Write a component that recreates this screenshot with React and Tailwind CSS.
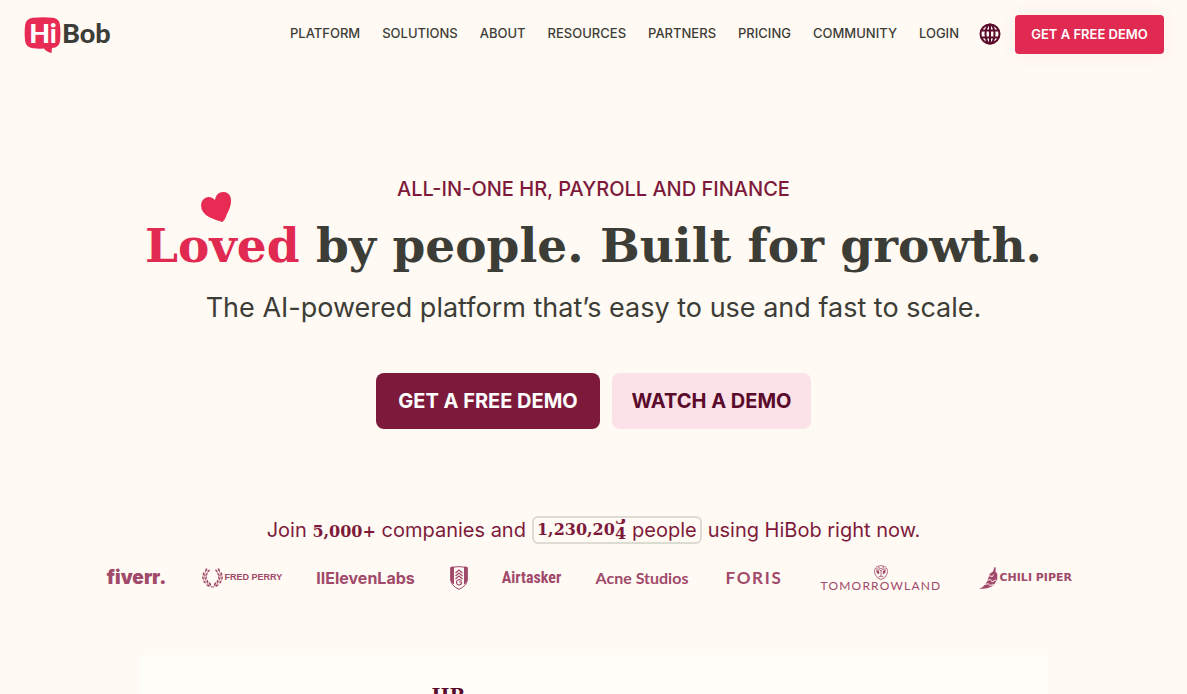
import React from "react";

const navItems = ["PLATFORM", "SOLUTIONS", "ABOUT", "RESOURCES", "PARTNERS", "PRICING", "COMMUNITY", "LOGIN"];

function BobLogo() {
    return (
        <a href="#" aria-label="HiBob" className="flex items-center font-['Lato'] text-[27px] font-black leading-8">
            <span className="relative flex h-9 w-[38px] justify-center">
                <svg className="absolute inset-0" width="38" height="36" viewBox="0 0 38 36" fill="#e72b54" aria-hidden="true">
                    <path d="M9 .8Q19-.4 29 .8Q35.300 1.500 36 8Q36.800 16 36 24Q35.300 30.500 28 31L27.500 36Q22 34.500 20 31.500Q14 31.900 9 31.200Q2 30.500 1.100 24Q.2 16 1.100 8Q2 1.500 9 .8Z" />
                </svg>
                <span className="relative text-white">Hi</span>
            </span>
            <span className="pb-1 text-[#3d3d38]">Bob</span>
        </a>
    );
}

function Globe() {
    return (
        <svg width="22" height="22" viewBox="0 0 22 22" fill="none" stroke="#5a0a2a" strokeWidth="2" aria-hidden="true">
            <circle cx="11" cy="11" r="9.500" />
            <ellipse cx="11" cy="11" rx="4.500" ry="9.500" />
            <path d="M2.500 7.500h17M2.500 14.500h17M11 1.500v19" />
        </svg>
    );
}

function Laurel() {
    const leaves = [
        [5, 3, 20], [2.500, 7, 5], [2, 11, -15], [3.500, 15, -35], [7, 18.500, -60],
        [7.500, 4, 40], [5.500, 7.500, 35], [5, 11, 15], [6.500, 14.500, -5], [9, 17, -30],
    ];
    return (
        <svg className="shrink-0" width="23" height="22" viewBox="0 0 23 22" fill="currentColor" aria-hidden="true">
            {[0, 1].map((side) => (
                <g key={side} transform={side ? "translate(23 0) scale(-1 1)" : undefined}>
                    {leaves.map(([x, y, r], index) => (
                        <ellipse key={index} cx={x} cy={y} rx=".8" ry="1.800" transform={`rotate(${r} ${x} ${y})`} />
                    ))}
                    <path d="M6.500 2Q2 7 4 12Q6 18 13 20.500" fill="none" stroke="currentColor" strokeWidth=".6" />
                </g>
            ))}
        </svg>
    );
}

function Shield() {
    return (
        <svg width="18" height="24" viewBox="0 0 18 24" fill="none" stroke="currentColor" aria-label="Fulham FC" role="img">
            <path d="M.7 1.500Q9-.3 17.300 1.500V14Q16.500 20 9 23.300Q1.500 20 .7 14Z" />
            <path d="M1 1.500l2.500-.5v17Q1.200 16 1 14ZM17 1.500l-2.500-.5v17Q16.800 16 17 14Z" fill="currentColor" />
            <path d="M5.500 7L9 4l3.500 3M5.500 10L9 7l3.500 3M5.500 13L9 10l3.500 3" strokeWidth="1.300" />
            <path d="M11.500 14.500Q8 12.500 6.500 15.500Q6.500 19 9 19Q12 18.500 11.500 16H9" strokeWidth="1.200" />
        </svg>
    );
}

function Emblem() {
    return (
        <svg width="14" height="15" viewBox="0 0 14 15" fill="none" stroke="currentColor" strokeWidth=".8" aria-hidden="true">
            <path d="M3 1.500Q7-.3 11 1.500Q14.500 4 13 9Q11 14 7 14.500Q3 14 1 9Q-.5 4 3 1.500Z" />
            <path d="M2 4Q5 3 7 6Q9 3 12 4M7 6v6M4.500 12Q7 10 9.500 12M4 2L7 4l3-2" />
            <path d="M2.500 5l2.500 1v3L3 8ZM11.500 5L9 6v3l2-1Z" fill="currentColor" strokeWidth=".4" />
        </svg>
    );
}

function Chili() {
    return (
        <svg className="shrink-0" width="20" height="22" viewBox="0 0 20 22" fill="currentColor" aria-hidden="true">
            <path d="M15.500 0l1.200.5-.2 4 1.800 2.500v5l-2.300 4.200-3.500 3.300Q7.500 22.500 0 21.500Q2.500 21 4.500 19.200L7.500 15.500l2.200-5.500.8-3 3.500-2.500Z" />
            <path d="M9 8.500l4.500 1 1-2M8 13.500l3.500-1 1.500 2.300 4-2M5.500 17.500l4-.8 1.500 2 3-1.500" fill="none" stroke="#fffaf3" strokeWidth=".9" />
        </svg>
    );
}

function Customers() {
    return (
        <div className="mt-5 flex h-7 items-center justify-center gap-9 whitespace-nowrap text-[#a1496a]">
            <span className="flex w-14 justify-center text-[19px] font-black">fiverr.</span>
            <span className="flex w-[81px] items-center gap-px font-['Liberation_Sans'] text-[9px] font-bold">
                <Laurel /> FRED PERRY
            </span>
            <span className="flex w-24 justify-center text-[16px] font-bold">IIElevenLabs</span>
            <Shield />
            <span className="flex w-14 justify-center font-['Liberation_Sans_Narrow','Roboto_Condensed','Liberation_Sans'] text-[16px] font-bold">Airtasker</span>
            <span className="flex w-[93px] justify-center font-['Lato'] text-[16px] font-bold">Acne Studios</span>
            <span className="flex w-[59px] justify-center font-['Lato'] text-[17px] font-bold tracking-widest">FORIS</span>
            <span className="flex w-[123px] flex-col items-center font-['Lato'] text-[12px] leading-3 tracking-widest">
                <Emblem />
                TOMORROWLAND
            </span>
            <span className="flex w-[100px] items-center gap-px font-['DejaVu_Sans'] text-[11px] font-bold">
                <Chili /> CHILI PIPER
            </span>
        </div>
    );
}

function Counter() {
    return (
        <span className="mx-[6px] flex h-7 items-center rounded-md border-2 border-[#dcdcd2] px-[3px]">
            <span className="font-['DejaVu_Serif'] text-[16px] font-bold">1,230,20</span>
            <span className="flex h-[22px] flex-col justify-end overflow-hidden font-['DejaVu_Serif'] text-[16px] font-bold leading-[15px]">
                <span>3</span>
                <span>4</span>
            </span>
            <span className="ml-[6px]">people</span>
        </span>
    );
}

export default function App() {
    return (
        <div className="min-h-screen bg-[#fffaf3] font-['Inter',sans-serif] text-[#3d3d38]">
            <header className="flex items-center justify-between pt-[15px] pr-[23px] pl-6">
                <BobLogo />
                <div className="flex items-center">
                    <nav className="flex gap-[22px] pb-px text-[13px] font-medium">
                        {navItems.map((item) => (
                            <a key={item} href="#">{item}</a>
                        ))}
                    </nav>
                    <button type="button" aria-label="Language" className="ml-5 pb-px">
                        <Globe />
                    </button>
                    <a href="#" className="ml-[14px] flex h-[39px] w-[149px] items-center justify-center rounded bg-[#e12a52] text-[13px] font-semibold text-white shadow-[0_0_20px_#e12a520f]">
                        GET A FREE DEMO
                    </a>
                </div>
            </header>

            <main>
                <section className="flex flex-col items-center pt-[122px] text-center">
                    <p className="text-[20px] font-medium leading-[26px] text-[#7d1a3c]">ALL-IN-ONE HR, PAYROLL AND FINANCE</p>
                    <h1 className="mt-[14px] whitespace-nowrap font-['DejaVu_Serif'] text-[47px] font-bold leading-[60px]">
                        <span className="relative text-[#e12a52]">
                            Loved
                            <svg className="absolute -top-[26px] left-14" width="31" height="30" viewBox="0 0 31 30" fill="#e72b54" aria-hidden="true">
                                <path d="M21.500 30Q15 28.500 8 25Q0 20.500 0 13Q.5 6.500 7 5Q11 4.500 14 8Q15 1.500 20 .3Q27-1 29.500 5Q31.500 12 26 22Q24.500 27 21.500 30Z" />
                            </svg>
                        </span>{" "}
                        by people. Built for growth.
                    </h1>
                    <p className="mt-[14px] text-[27px] leading-9">The AI-powered platform that’s easy to use and fast to scale.</p>
                    <div className="mt-[47px] flex gap-3 text-[20px] font-bold">
                        <a href="#" className="flex h-14 w-56 items-center justify-center rounded-lg bg-[#7d1a3c] text-white">GET A FREE DEMO</a>
                        <a href="#" className="flex h-14 w-[199px] items-center justify-center rounded-lg bg-[#fbe1e8] text-[#5a0a2a]">WATCH A DEMO</a>
                    </div>
                </section>

                <section className="pt-[87px]">
                    <div className="flex h-7 items-center justify-center whitespace-nowrap text-[20px] leading-7 text-[#7d1a3c]">
                        <p>
                            Join <strong className="font-['DejaVu_Serif'] text-[16px] leading-none">5,000+</strong> companies and
                        </p>
                        <Counter />
                        <p>using HiBob right now.</p>
                    </div>
                    <Customers />
                </section>

                <section className="mx-auto mt-[63px] w-10/12 max-w-[908px] bg-[#fffdf7] pt-[26px] pb-10">
                    <h2 className="ml-[292px] font-['DejaVu_Serif'] text-[19px] font-bold leading-7 text-[#5a0a2a]">HR</h2>
                </section>
            </main>
        </div>
    );
}
